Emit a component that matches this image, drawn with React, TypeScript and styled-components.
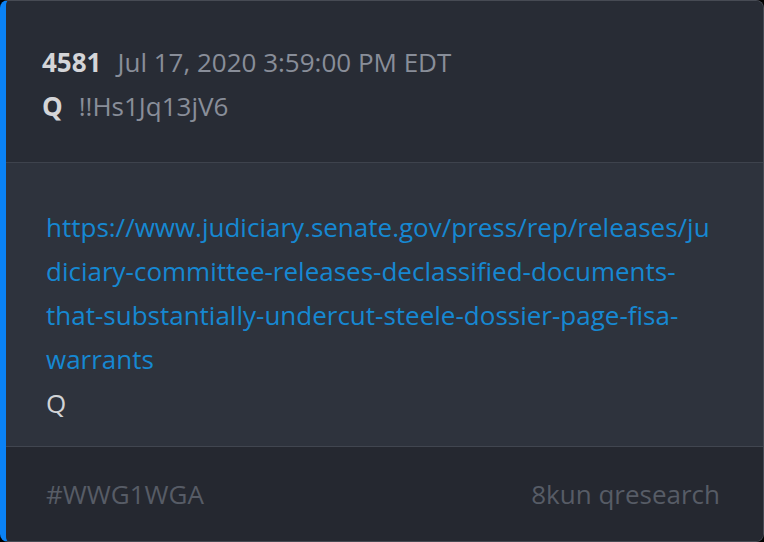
import styled, { createGlobalStyle } from "styled-components";

const GlobalStyle = createGlobalStyle`
  html, body {
    margin: 0;
    padding: 0;
    background: #000000;
    font-family: "Open Sans", "Noto Sans", sans-serif;
  }
  * {
    box-sizing: border-box;
  }
`;

const App = () => {
  return (
    <>
      <GlobalStyle />
      <PostCardStyled>
        <PostHeaderStyled>
          <MetaRowStyled>
            <PostNumberStyled>4581</PostNumberStyled>
            <MetaTextStyled>Jul 17, 2020 3:59:00 PM EDT</MetaTextStyled>
          </MetaRowStyled>
          <MetaRowStyled>
            <PostNumberStyled>Q</PostNumberStyled>
            <MetaTextStyled>!!Hs1Jq13jV6</MetaTextStyled>
          </MetaRowStyled>
        </PostHeaderStyled>
        <PostBodyStyled>
          <LinkStyled href="#">
            https://www.judiciary.senate.gov/press/rep/releases/judiciary-committee-releases-declassified-documents-that-substantially-undercut-steele-dossier-page-fisa-warrants
          </LinkStyled>
          <BodyTextStyled>Q</BodyTextStyled>
        </PostBodyStyled>
        <PostFooterStyled>
          <FooterTextStyled>#WWG1WGA</FooterTextStyled>
          <FooterTextStyled>8kun qresearch</FooterTextStyled>
        </PostFooterStyled>
      </PostCardStyled>
    </>
  );
};

const PostCardStyled = styled.div`
  display: flex;
  flex-direction: column;
  width: 764px;
  height: 542px;
  border: 1px solid #474b54;
  border-left: 6px solid #0a82f5;
  border-radius: 8px;
  overflow: hidden;
  background-color: #282c35;
`;

const PostHeaderStyled = styled.div`
  display: flex;
  flex-direction: column;
  justify-content: center;
  height: 162px;
  padding: 4px 0 0 36px;
  background-color: #282c35;
  border-bottom: 1px solid #3e434d;
`;

const MetaRowStyled = styled.div`
  display: flex;
  align-items: baseline;
  gap: 16px;
  height: 44px;
  line-height: 44px;
`;

const PostNumberStyled = styled.span`
  font-size: 26px;
  font-weight: 700;
  color: #d4d5d8;
`;

const MetaTextStyled = styled.span`
  font-size: 26px;
  color: #898e99;
`;

const PostBodyStyled = styled.div`
  display: flex;
  flex-direction: column;
  flex: 1;
  padding: 42px 50px 16px 40px;
  background-color: #2e333d;
  border-bottom: 1px solid #414650;
`;

const LinkStyled = styled.a`
  font-size: 26px;
  line-height: 44px;
  color: #1688d2;
  text-decoration: none;
  overflow-wrap: anywhere;
`;

const BodyTextStyled = styled.div`
  font-size: 26px;
  line-height: 44px;
  color: #d2d3d6;
`;

const PostFooterStyled = styled.div`
  display: flex;
  align-items: center;
  justify-content: space-between;
  height: 94px;
  padding: 0 43px 0 40px;
  background-color: #252830;
`;

const FooterTextStyled = styled.span`
  font-size: 26px;
  color: #575c66;
`;

export default App;
